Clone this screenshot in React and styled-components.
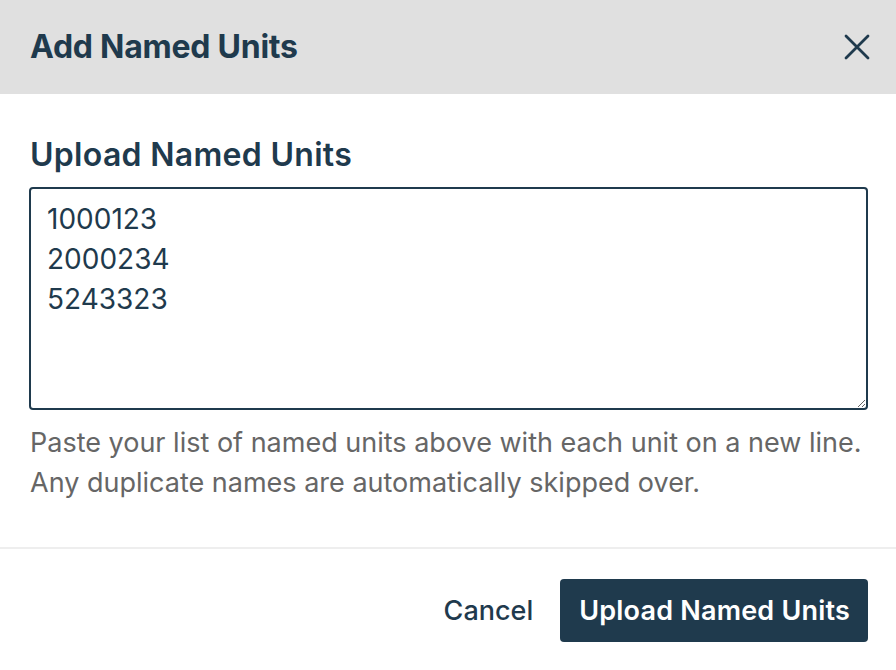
import React from "react";
import styled, { createGlobalStyle } from "styled-components";

const Global = createGlobalStyle`
  html, body { margin: 0; padding: 0; background: #ffffff; }
  body { font-family: Inter, "Noto Sans", sans-serif; color: #1f3a4d; }
  * { box-sizing: border-box; }
`;

const Modal = styled.div`
  width: 896px;
  height: 670px;
  background: #ffffff;
  display: flex;
  flex-direction: column;
`;

const Header = styled.header`
  height: 94px;
  flex: none;
  background: #e0e0e0;
  display: flex;
  align-items: center;
  justify-content: space-between;
  padding: 0 24px 0 30px;
`;

const Title = styled.h2`
  margin: 0;
  font-size: 32px;
  font-weight: 700;
  line-height: 40px;
  color: #1f3a4d;
  letter-spacing: -0.25px;
`;

const CloseButton = styled.button`
  border: 0;
  background: transparent;
  padding: 0;
  width: 30px;
  height: 30px;
  display: flex;
  align-items: center;
  justify-content: center;
  cursor: pointer;
  color: #1f3a4d;
`;

const Body = styled.section`
  padding: 41px 28px 44px 29px;
  border-bottom: 2px solid #eeeeee;
`;

const Label = styled.label`
  display: block;
  font-size: 32px;
  font-weight: 600;
  line-height: 40px;
  color: #1f3a4d;
  margin: 0 0 12px 1px;
  letter-spacing: 0.3px;
`;

const TextArea = styled.textarea`
  display: block;
  width: 100%;
  height: 223px;
  border: 2px solid #1f3a4d;
  border-radius: 4px;
  padding: 10px 16px 8px;
  font-family: Inter, "Noto Sans", sans-serif;
  font-size: 28px;
  line-height: 40px;
  color: #1f3a4d;
  resize: vertical;
  outline: none;
`;

const Help = styled.p`
  margin: 13px 0 0 1px;
  font-size: 27px;
  line-height: 40px;
  color: #666666;
`;

const Footer = styled.footer`
  display: flex;
  justify-content: flex-end;
  align-items: center;
  gap: 27px;
  padding: 30px 28px 0 30px;
`;

const TextButton = styled.button`
  border: 0;
  background: transparent;
  padding: 0;
  font-family: Inter, "Noto Sans", sans-serif;
  font-size: 27px;
  font-weight: 500;
  color: #1f3a4d;
  cursor: pointer;
`;

const PrimaryButton = styled.button`
  height: 63px;
  padding: 0 18px 0 19px;
  border: 0;
  border-radius: 4px;
  background: #1f3a4d;
  color: #ffffff;
  font-family: Inter, "Noto Sans", sans-serif;
  font-size: 27px;
  font-weight: 600;
  letter-spacing: 0.2px;
  cursor: pointer;
`;

export default function App() {
  return (
    <>
      <Global />
      <Modal>
        <Header>
          <Title>Add Named Units</Title>
          <CloseButton aria-label="Close">
            <svg width="26" height="26" viewBox="0 0 26 26">
              <path d="M2 2 L24 24 M24 2 L2 24" stroke="currentColor" strokeWidth="2.8" strokeLinecap="round" fill="none" />
            </svg>
          </CloseButton>
        </Header>
        <Body>
          <Label htmlFor="units">Upload Named Units</Label>
          <TextArea id="units" defaultValue={"1000123\n2000234\n5243323"} />
          <Help>
            Paste your list of named units above with each unit on a new line.
            <br />
            Any duplicate names are automatically skipped over.
          </Help>
        </Body>
        <Footer>
          <TextButton>Cancel</TextButton>
          <PrimaryButton>Upload Named Units</PrimaryButton>
        </Footer>
      </Modal>
    </>
  );
}
